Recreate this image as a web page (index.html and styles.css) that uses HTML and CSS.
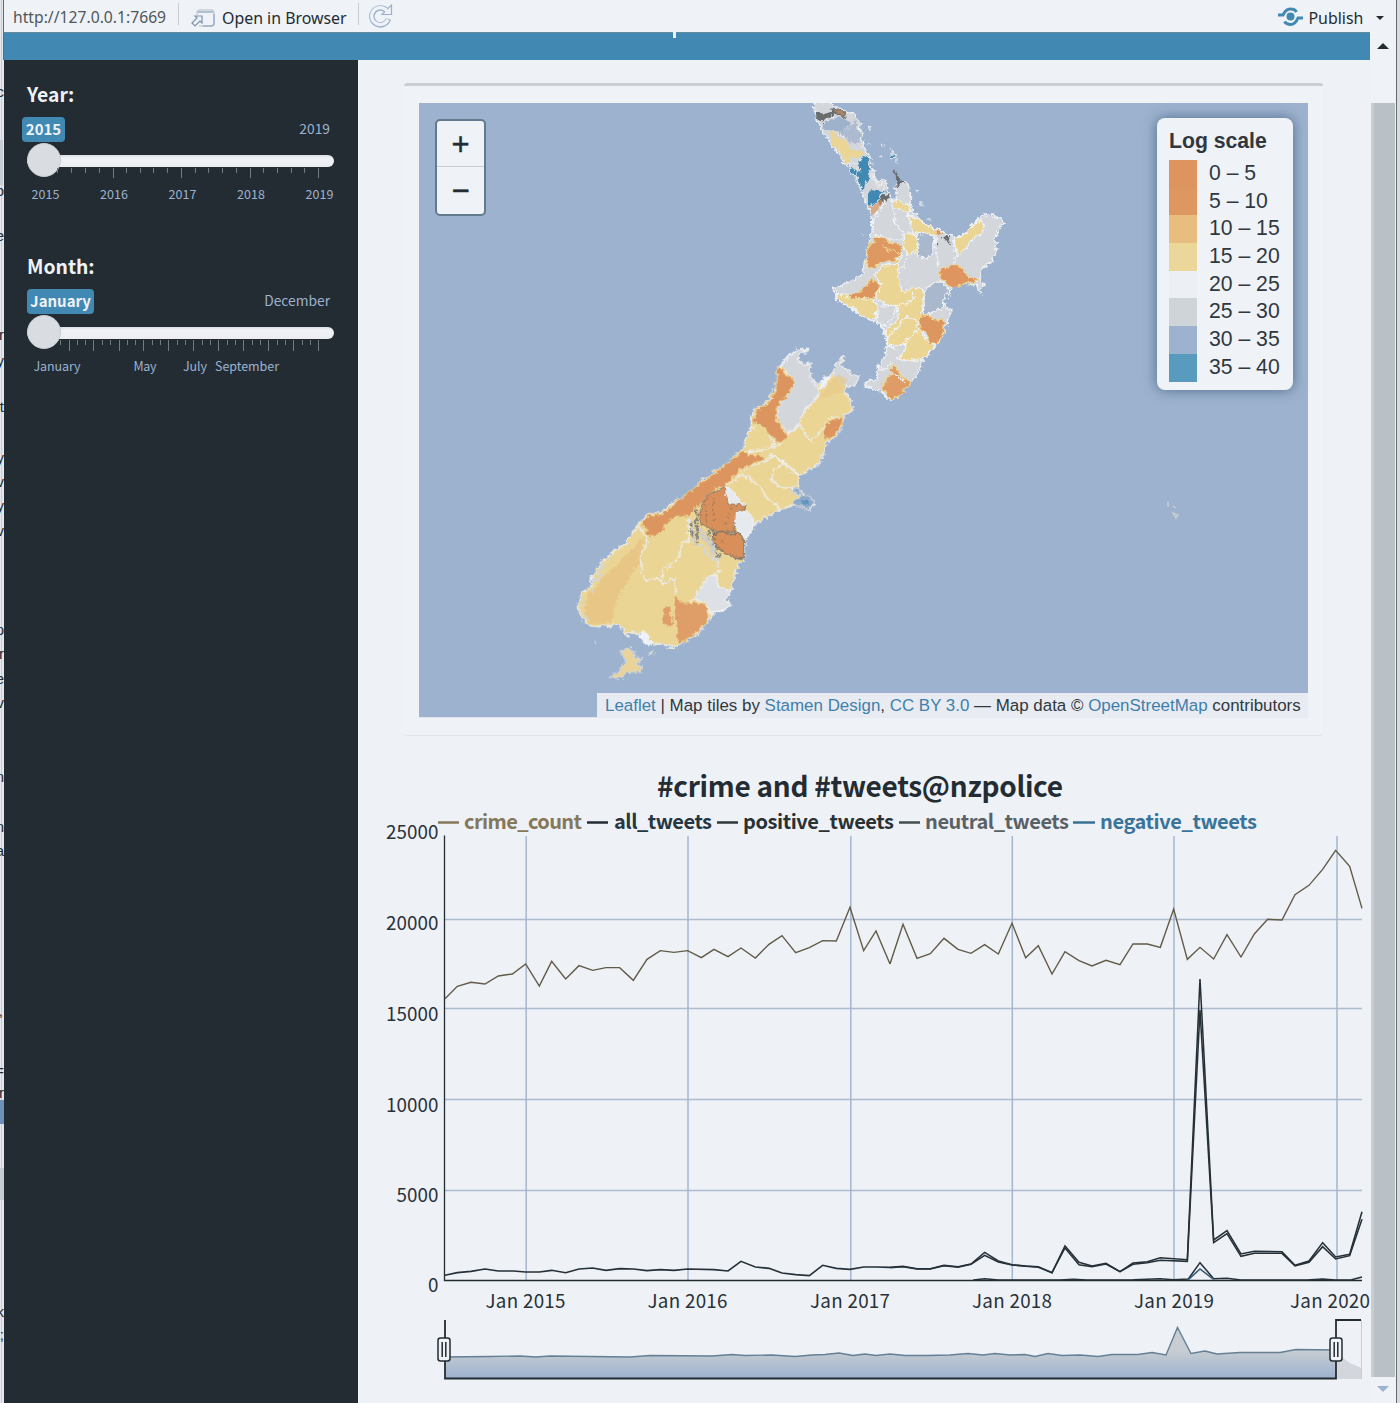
FILE: index.html
```html
<!DOCTYPE html>
<html lang="en">
<head>
<meta charset="utf-8">
<title>Crime dashboard</title>
<link rel="stylesheet" href="styles.css">
</head>
<body>
<div class="window">
  <svg class="edge" width="4" height="1403" viewBox="0 0 4 1403">
    <rect width="4" height="1403" fill="#e4e8ed"/>
    <path d="M1.5 0V1403" stroke="#c7cdd2"/><path d="M3.5 0V60" stroke="#646b70"/>
    <rect y="140" width="3" height="45" fill="#c7cdd2"/><rect y="1100" width="4" height="24" fill="#7190b8"/><rect y="1168" width="4" height="32" fill="#c7cdd2"/>
    <g class="edge-text" text-anchor="end">
      <text x="4" y="97">c</text><text x="4" y="196">o</text><text x="4" y="241">e</text><text x="4" y="340">r</text><text x="4" y="366">y</text><text x="4" y="412">t</text><text x="4" y="463">y</text><text x="4" y="487">v</text><text x="4" y="511">y</text><text x="4" y="536">v</text><text x="4" y="635">p</text><text x="4" y="659">r</text><text x="4" y="684">e</text><text x="4" y="708">v</text><text x="4" y="782">n</text><text x="4" y="832">n</text><text x="4" y="856">a</text><text x="3" y="1016">,</text><text x="4" y="1076">=</text><text x="4" y="1098">r</text><text x="4" y="1317">k</text><text x="4" y="1340">;</text>
    </g>
  </svg>

  <div class="viewer">
    <div class="toolbar">
      <span class="url">http://127.0.0.1:7669</span>
      <i class="sep"></i>
      <svg class="open-icon" width="25" height="20" viewBox="0 0 25 20" fill="none" stroke="#9db2ce">
        <path d="M6 7V5q0-3 3-3h11q3 0 3 3v10q0 3-3 3H8" stroke="#c7cdd2" stroke-width="1.5"/><path d="M7 4H22M23 6V15q0 3-3 3H12" stroke-width="1.5"/>
        <path d="M1 15L6 10L4 8H11V15L9 13L4 18Z" stroke="#7e93ac" stroke-width="1.2" fill="#eff2f7"/>
      </svg>
      <span class="open">Open in Browser</span>
      <i class="sep sep2"></i>
      <svg class="reload" width="24" height="24" viewBox="0 0 24 24" fill="none">
        <path d="M18 7A8.500 8.500 0 1 0 19.500 15" stroke="#9db2ce" stroke-width="5.500"/><path d="M13 10.500H22.500V1Z" fill="#eff2f7" stroke="#9db2ce" stroke-width="1.200"/>
        <path d="M18 7A8.500 8.500 0 1 0 19 15.500" stroke="#eff2f7" stroke-width="3.200"/>
      </svg>
      <span class="spring"></span>
      <svg class="pub-icon" width="25" height="20" viewBox="0 0 25 20">
        <circle cx="12.500" cy="9.500" r="4" fill="#4189b3"/>
        <path d="M0 8H5Q8 1.500 13 2Q17 2 18.500 5M25 11H20Q17 18 12 17.500Q8 17 6.500 14.500" fill="none" stroke="#4189b3" stroke-width="3"/>
      </svg>
      <span class="publish">Publish</span>
      <i class="caret"></i>
    </div>

    <div class="page">
      <div class="app">
        <div class="header"><i class="descender"></i></div>
        <div class="columns">
          <aside class="sidebar">
            <section class="control">
              <h4>Year:</h4>
              <div class="range-labels"><b class="tag tag-year">2015</b><span>2019</span></div>
              <div class="track"><i class="bar"></i><i class="knob"></i></div>
              <svg class="grid" width="310" height="38" viewBox="0 0 310 38">
                <path d="M30.500 2v5M44.500 2v5M58.500 2v5M72.500 2v5M99.500 2v5M113.500 2v5M126.500 2v5M140.500 2v5M168.500 2v5M181.500 2v5M195.500 2v5M209.500 2v5M236.500 2v5M250.500 2v5M264.500 2v5M277.500 2v5" stroke="#747b80"/>
                <path d="M86.500 2v10M154.500 2v10M223.500 2v10M291.500 2v10" stroke="#747b80"/>
                <g class="tick-text" text-anchor="middle"><text x="18.500" y="32.500" textLength="28">2015</text><text x="87" y="32.500" textLength="28">2016</text><text x="155.500" y="32.500" textLength="28">2017</text><text x="224" y="32.500" textLength="28">2018</text><text x="292.500" y="32.500" textLength="28">2019</text></g>
              </svg>
            </section>
            <section class="control">
              <h4>Month:</h4>
              <div class="range-labels"><b class="tag tag-month">January</b><span>December</span></div>
              <div class="track"><i class="bar"></i><i class="knob"></i></div>
              <svg class="grid" width="310" height="38" viewBox="0 0 310 38">
                <path d="M33.500 2v5M50.500 2v5M58.500 2v5M75.500 2v5M83.500 2v5M100.500 2v5M108.500 2v5M125.500 2v5M133.500 2v5M150.500 2v5M158.500 2v5M175.500 2v5M183.500 2v5M200.500 2v5M208.500 2v5M225.500 2v5M233.500 2v5M250.500 2v5M258.500 2v5M275.500 2v5M283.500 2v5" stroke="#747b80"/>
                <path d="M42.500 2v11M66.500 2v11M92.500 2v11M116.500 2v11M141.500 2v11M166.500 2v11M191.500 2v11M216.500 2v11M241.500 2v11M266.500 2v11M291.500 2v11" stroke="#747b80"/>
                <g class="tick-text" text-anchor="middle"><text x="30" y="32.500" textLength="47">January</text><text x="118" y="32.500" textLength="23">May</text><text x="168" y="32.500" textLength="24">July</text><text x="220" y="32.500" textLength="64">September</text></g>
              </svg>
            </section>
          </aside>

          <main class="content">
            <div class="box">
              <div class="map">
                <svg class="land" width="889" height="615" viewBox="419 103 889 615">
                  <defs>
                    <filter id="coast" filterUnits="userSpaceOnUse" x="419" y="90" width="889" height="628">
                      <feTurbulence type="turbulence" baseFrequency="0.160" numOctaves="2" seed="4"/>
                      <feDisplacementMap in="SourceGraphic" scale="6" xChannelSelector="R" yChannelSelector="G" result="rough"/>
                      <feOffset dx="-1.500" dy="-1.500"/>
                    </filter>
                  </defs>
                  <g filter="url(#coast)">
                  <g transform="translate(780 100) scale(.33333)" stroke="#eff2f7" stroke-width="4" stroke-linejoin="round">
                    <path fill="#d3d7dc" d="M98 5L152 5 158 20 185 22 200 40 222 38 228 55 240 68 238 85 247 100 244 118 248 140 262 160 270 180 268 200 282 215 278 230 290 248 300 238 316 240 320 265 326 285 330 298 346 296 345 260 350 245 380 245 385 270 392 290 390 310 400 335 415 355 440 372 465 385 480 392 508 402 520 410 545 405 575 375 605 345 640 345 655 352 672 366 660 372 650 390 648 440 640 475 625 490 605 510 598 535 612 555 600 580 590 552 550 550 515 560 505 580 490 600 495 620 513 630 500 665 495 690 465 735 432 775 410 820 385 850 365 880 335 900 318 895 300 870 275 865 255 858 252 850 265 842 285 840 292 800 315 765 318 735 316 700 300 670 265 658 230 635 200 615 165 595 163 565 190 550 210 540 240 530 255 500 258 450 265 425 272 405 275 370 270 335 262 318 255 300 240 270 236 245 215 215 208 195 190 190 185 175 175 160 150 130 135 105 123 88 118 70 105 50 103 32Z"/>
                    <g stroke="none">
                      <path fill="#6b6d6d" d="M104 34L130 38 150 34 158 20 182 24 198 42 195 54 170 42 145 52 132 60 123 70 106 52Z"/>
                      <path fill="#dd955f" d="M152 28L180 25 192 40 190 50 170 35Z" opacity=".55"/>
                      <path fill="#9fb2cb" d="M126 86L135 62 170 50 205 58 212 74 180 92 150 88Z"/>
                      <path fill="#acbbcf" d="M170 98L205 82 218 70 225 55 230 84 244 100 238 120 228 130 206 130 196 105Z"/>
                      <path fill="#ebd594" d="M145 98L160 95 170 108 195 118 204 140 222 152 248 152 252 160 228 172 205 166 208 190 194 188 188 168 168 145Z"/>
                      <path fill="#4189b3" d="M235 180L248 168 268 178 268 205 260 218 266 235 252 245 248 274 240 270 236 242 215 215 212 203 238 215Z"/>
                      <path fill="#4189b3" d="M270 268L290 268 302 274 320 270 298 282 290 304 270 314 260 312 262 292Z"/>
                      <path fill="#646b70" d="M300 288L326 280 324 296 304 312 292 312Z"/>
                      <path fill="#dd955f" d="M300 300L318 296 306 310 296 318 288 338 272 344 268 325Z" opacity=".7"/>
                      <path fill="#646b70" d="M335 206L345 216 355 234 374 246 350 260 347 238Z"/>
                    </g>
                    <path fill="#ebd594" d="M334 304L352 300 368 312 386 308 390 332 368 334 354 324 336 326Z"/>
                    <path fill="#ebd594" d="M380 340L410 358 440 372 465 386 480 398 460 406 400 398Z"/>
                    <path fill="#646b70" stroke="none" d="M463 430L475 428 466 440ZM482 412L508 402 502 422 510 434 490 420Z"/><path fill="#dd955f" stroke="none" d="M466 388L486 400 470 406Z"/>
                    <path fill="#ebd594" d="M520 413L548 405 575 375 600 357 609 370 606 395 575 418 560 438 534 462 522 436Z"/>
                    <path fill="#a9b8cd" d="M410 404L440 398 465 412 458 455 440 474 412 468 404 440Z"/>
                    <path fill="#ebd594" d="M366 400L400 398 412 415 408 455 384 460 368 445Z"/>
                    <path fill="#de9964" stroke="#ebd594" d="M284 408L305 410 326 425 362 434 360 464 345 474 358 482 306 484 284 503 259 498 258 455 265 430 280 426Z"/>
                    <path d="M305 432L325 448 360 460" stroke="#ebd594" fill="none"/>
                    <path fill="#de955f" stroke="#ebd594" d="M478 502L503 498 520 490 545 504 560 525 598 540 548 552 513 562 480 535Z"/>
                    <path fill="#a9b8cd" d="M455 550L480 542 505 565 505 580 490 600 485 624 460 632 438 646 424 634 432 610 430 570Z"/>
                    <path fill="#ebd594" d="M278 522L306 498 355 486 354 540 364 576 405 562 430 575 424 630 412 668 376 650 330 710 350 730 322 734 312 690 350 660 354 620 300 606 284 592 302 550Z"/>
                    <path fill="#ebd594" d="M300 606L320 612 352 614 386 606 400 592 400 576"/>
                    <path fill="#ebd594" d="M166 575L200 588 236 594 278 593 292 620 284 656 260 656 230 634 204 616 168 596Z"/>
                    <path fill="#dd955f" stroke="#ebd594" d="M204 585L248 568 270 533 298 553 280 592 208 594Z"/>
                    <path fill="#d3d7dc" d="M292 620L350 614 344 644 326 664 308 678 288 656Z"/>
                    <path fill="#ebd594" d="M318 712L345 685 378 650 408 660 416 682 400 706 374 728 346 734 324 734Z"/>
                    <path fill="#ebd594" d="M416 684L444 725 462 736 432 776 402 780 350 774 374 745 374 728Z"/>
                    <path fill="#dd965f" stroke="#ebd594" d="M418 644L450 646 460 656 493 660 492 690 468 730 446 730 438 702 416 684Z"/>
                    <path fill="#df9c66" stroke="#ebd594" d="M334 790L345 798 360 826 390 845 384 858 364 882 336 898 318 892 318 876 302 866 318 830 334 822Z"/>
                    <path d="M334 818L350 824 372 846M318 735L350 745M384 460L362 510M355 486L362 460M465 412L466 450 474 500M515 420L530 465 520 490M272 410L300 405 325 416 364 416M275 370L315 300M340 330L344 370 368 398M292 800L312 810 335 784" fill="none"/>
                    <path fill="#d3d7dc" stroke-width="2" d="M334 160L330 172 345 178 354 188M264 76l6 6-4 6zM302 132l12 2-6 6zM405 266l6 3-4 2zM422 310l6 2-4 3zM440 356l10 2zM248 400v5M332 154l4-8 12 14-4 10-10-3zM262 134l8-4zM298 168l8 0-3 5z"/>
                    <circle cx="338" cy="169" r="5" fill="#4189b3" stroke="none"/>
                    <path d="M280 218L270 232 284 240 288 256 310 250 308 264 325 262M212 190L236 188M230 205L225 240 250 275 254 310M280 186L270 194M245 165L238 180M292 262L300 250M172 96L196 112M135 58L160 48" stroke="#e4e8ec" fill="none"/>
                  </g>
                  <g transform="translate(560 340) scale(.33333)" stroke="#eff2f7" stroke-width="4" stroke-linejoin="round">
                    <path fill="#ebd594" d="M652 80L680 55 692 38 705 28 742 28 742 34 715 38 712 60 728 72 748 68 750 105 760 122 765 140 785 118 800 108 815 98 824 90 830 65 848 45 850 60 840 75 858 86 868 96 895 112 880 135 855 142 855 155 868 180 878 200 865 220 850 228 840 265 820 295 800 305 790 335 775 370 740 392 715 405 712 440 718 455 735 465 758 478 760 495 745 508 725 500 700 490 660 508 620 530 595 545 575 565 555 595 552 655 535 680 520 705 515 745 495 775 512 795 490 808 455 820 445 840 425 865 410 880 375 905 330 922 290 908 270 915 250 908 240 880 205 875 200 890 185 860 160 848 155 857 90 855 75 845 65 830 55 815 52 795 60 765 90 735 95 710 110 690 120 665 140 650 160 632 195 610 210 585 230 555 260 522 300 518 340 485 385 460 420 425 470 390 500 370 545 325 565 275 572 245 580 205 600 200 625 180 640 155 650 120Z"/>
                    <path fill="#e5b878" stroke="none" d="M210 630L245 600 250 590 240 660 200 720 170 780 150 848 92 850 70 815 85 760 140 700Z" opacity=".5"/>
                    <path fill="#d3d7dc" d="M660 78L680 55 705 28 742 28 716 38 712 60 728 72 748 70 750 105 776 150 772 166 730 212 718 246 700 268 676 274 654 240 650 208 665 182 680 172 700 126 690 108Z"/>
                    <path fill="#d3d7dc" stroke-width="3" d="M815 98L830 65 848 45 840 75 868 96 895 112 880 135 855 140 835 120Z"/>
                    <path fill="#eff2f7" d="M776 148L785 118 812 102 792 135Z"/>
                    <path fill="#e8c98a" stroke="none" d="M820 108l38 4-10 40-70 20z" opacity=".7"/>
                    <path d="M718 250L735 282 756 303 775 280 812 230 850 228M774 166L730 212M640 322L716 252M565 275L592 244 640 300 640 322 550 338M632 340L680 372 716 404M550 388L580 370 612 362 640 345 665 368 640 390 634 420 660 440 712 442M546 400L590 430 620 474 662 508M496 438L546 398M665 368L712 405M232 556L262 590 255 620 238 650 248 705 256 720 292 710 308 732 345 715 342 760M385 528L384 600 364 608 355 645 330 678 308 685 306 724M468 655L476 690 462 705 465 750 505 752M340 765L350 900M405 770L380 790" fill="none"/>
                    <path fill="#dd955f" stroke="#ebd594" d="M652 80L665 82 674 106 690 108 702 124 690 150 680 174 664 180 648 210 652 238 675 275 683 284 668 304 645 303 638 292 610 266 592 246 576 254 586 204 602 203 628 182 645 150Z"/>
                    <path fill="#dd955f" stroke="#ebd594" d="M548 326L562 344 612 346 610 358 580 366 548 386 520 408 494 438 470 442 420 490 385 526 345 530 320 548 300 582 264 590 262 570 240 552 262 524 305 520 345 486 420 428 490 378Z"/>
                    <path fill="#dd955f" stroke="#ebd594" d="M848 228L840 262 818 292 792 298 786 270 812 234Z"/>
                    <path fill="#d98f5a" stroke="#8b7b6a" d="M445 465L488 442 500 460 502 490 530 492 554 494 548 508 532 512 526 540 518 555 524 572 460 574 440 560 424 554 416 525 424 490Z"/>
                    <path fill="#d98f5a" stroke="#6e6c68" d="M460 580L490 576 515 580 530 574 550 595 550 656 520 650 490 635 458 610Z"/>
                    <path fill="#e6e9ee" d="M494 444L512 446 538 480 552 490 510 488 500 466ZM528 515L560 510 585 545 555 592 542 580 522 556Z"/>
                    <g fill="none" stroke-width="6"><path d="M388 535L400 605 425 615 440 645 465 660 488 650" stroke="#d3d7dc"/><path d="M408 508V612M390 545L395 590M444 570V600M465 610L472 650 484 646" stroke="#747778" stroke-dasharray="18 5"/><path d="M416 565L430 590 455 612 462 645" stroke="#c7cdd2" stroke-width="13" stroke-dasharray="10 3"/><path d="M512 504L490 560M485 600L470 616M458 460V540M435 480V550" stroke="#545859" stroke-width="3" stroke-dasharray="4 11"/></g>
                    <path fill="#dde1e6" d="M440 708L468 704 470 735 510 752 495 776 512 795 488 806 452 816 432 786 402 774 412 752Z"/>
                    <path fill="#df9d67" stroke="#ebd594" d="M338 762L355 778 378 788 432 786 446 828 440 845 410 876 372 906 350 910 348 870Z"/>
                    <path fill="#df9d67" stroke="#ebd594" d="M310 798L332 794 340 858 305 852Z"/>
                    <path fill="#eff2f7" d="M244 870L262 880 264 898 278 910 256 914 240 890Z"/>
                    <path fill="#8eaacb" stroke="#d3d7dc" d="M690 450L714 440 720 460 750 468 760 488 745 506 725 500 700 490 706 478 720 468Z"/><path fill="#5b92bd" stroke="none" d="M722 480h24v12h-14z"/>
                    <path stroke="#d3d7dc" stroke-width="8" fill="none" stroke-dasharray="9 5" d="M60 765L72 800M94 725L130 705M100 752L80 740M66 822L85 840M130 670L115 700M150 650L158 658"/>
                    <path fill="#e9d398" stroke="#d3d7dc" d="M180 936L200 922 214 930 226 950 244 952 230 966 244 978 240 994 205 995 180 1015 152 1010 178 990 195 960ZM262 938L282 932 272 945Z"/>
                    <path d="M98 905h6v4M912 135L935 120M918 138L935 142" fill="none" stroke-width="3"/>
                  </g>
                  </g>
                  <path d="M1168 502v5M1173 506l3 2M1173 513l5 2-2 3z" fill="none" stroke="#c7cdd2" stroke-width="1.500"/>
                  <path d="M419 717.500H597" stroke="#dfe4eb"/>
                </svg>
                <div class="zoom"><b>+</b><b>−</b></div>
                <div class="legend">
                  <strong>Log scale</strong>
                  <div class="row"><i class="c1"></i>0 – 5</div>
                  <div class="row"><i class="c2"></i>5 – 10</div>
                  <div class="row"><i class="c3"></i>10 – 15</div>
                  <div class="row"><i class="c4"></i>15 – 20</div>
                  <div class="row"><i class="c5"></i>20 – 25</div>
                  <div class="row"><i class="c6"></i>25 – 30</div>
                  <div class="row"><i class="c7"></i>30 – 35</div>
                  <div class="row"><i class="c8"></i>35 – 40</div>
                </div>
                <div class="attribution"><a>Leaflet</a> | Map tiles by <a>Stamen Design</a>, <a>CC BY 3.0</a> — Map data © <a>OpenStreetMap</a> contributors</div>
              </div>
            </div>

            <svg class="chart" width="1012" height="668" viewBox="358 735 1012 668">
              <defs><linearGradient id="fade" x1="0" y1="0" x2="0" y2="1"><stop offset="0.450" stop-color="#c7cdd2"/><stop offset="1" stop-color="#9db2ce"/></linearGradient></defs>
              <text class="title" x="657" y="797" textLength="406">#crime and #tweets@nzpolice</text>
              <g class="keys">
                <path d="M438 822.500h21" stroke="#857759"/><text x="464" y="829" textLength="118" fill="#857759">crime_count</text>
                <path d="M587 822.500h21" stroke="#232c33"/><text x="614" y="829" textLength="98" fill="#253642">all_tweets</text>
                <path d="M717 822.500h21" stroke="#2f373b"/><text x="743" y="829" textLength="151" fill="#293135">positive_tweets</text>
                <path d="M899 822.500h21" stroke="#444d52"/><text x="925" y="829" textLength="144" fill="#596167">neutral_tweets</text>
                <path d="M1073 822.500h22" stroke="#39718f"/><text x="1100" y="829" textLength="157" fill="#397498">negative_tweets</text>
              </g>
              <path d="M445 919.500H1362M445 1008.500H1362M445 1099.500H1362M445 1190.500H1362" stroke="#adbccf" stroke-width="1.400"/>
              <path d="M526.200 836V1280M688 836V1280M850.800 836V1280M1012.300 836V1280M1174 836V1280M1337 836V1280" stroke="#a5b7cf" stroke-width="1.500"/>
              <path d="M444.500 835.500V1280.500H1362" stroke="#232c33" stroke-width="1.300" fill="none"/>
              <g class="axis" text-anchor="end"><text x="438.500" y="839" textLength="52.500">25000</text><text x="438.500" y="930" textLength="52.500">20000</text><text x="438.500" y="1021" textLength="52.500">15000</text><text x="438.500" y="1112" textLength="52.500">10000</text><text x="438.500" y="1201.500" textLength="42">5000</text><text x="438.500" y="1292">0</text></g>
              <g class="axis" text-anchor="middle"><text x="525.500" y="1308" textLength="80">Jan 2015</text><text x="687.500" y="1308" textLength="80">Jan 2016</text><text x="850" y="1308" textLength="80">Jan 2017</text><text x="1012" y="1308" textLength="80">Jan 2018</text><text x="1174" y="1308" textLength="80">Jan 2019</text><text x="1330" y="1308" textLength="80">Jan 2020</text></g>
              <g transform="translate(370 760) scale(.33333)" fill="none" stroke="#625b47" stroke-width="4.200">
                <polyline points="225,716 262,679 303,667 345,672 385,648 427,642 467,612 508,678 545,604 587,657 627,617 668,631 708,623 749,623 790,661 831,598 871,572 912,577 953,572 994,593 1032,568 1074,590 1113,564 1156,594 1197,553 1236,527 1277,578 1318,563 1358,542 1399,543 1440,442 1481,572 1518,513 1560,612"/>
                <polyline transform="translate(1530 0)" points="30,612 69,493 111,595 151,581 192,535 234,568 273,580 314,554 355,582 396,490 437,593 475,557 516,642 555,575 597,602 636,618 678,601 720,614 759,552 802,552 841,562 881,447 922,598 960,562 1001,597 1041,524 1083,591 1123,522 1163,478 1206,480 1245,404 1287,376 1328,328 1367,271 1409,319 1446,445"/>
              </g>
              <g transform="translate(370 1180) scale(.33333)" fill="none" stroke="#263038" stroke-width="4.800">
                <polyline points="225,286 262,278 303,274 345,267 385,273 430,273 467,276 508,276 545,271 587,278 627,267 668,264 708,271 749,266 790,267 831,272 871,269 912,271 953,267 1032,269 1074,273 1113,244 1156,261 1197,265 1236,279 1277,284 1318,287 1358,256 1399,265 1440,268 1481,261 1518,261 1560,262"/>
                <g transform="translate(1530 0)" stroke-width="4.600">
                  <polyline points="30,262 69,259 111,266 151,266 192,256 234,260 273,252 314,217 355,243 396,254 437,258 475,260 516,278 555,198 597,247 636,258 678,250 720,275 759,249 802,245 841,233 922,239 960,-603 1001,180 1041,152 1083,222 1123,214 1206,215 1245,256 1287,243 1328,188 1367,231 1409,223 1446,95"/>
                  <polyline points="30,263 69,260 111,267 151,267 192,257 234,262 273,253 314,226 355,246 396,255 437,259 475,262 516,278 555,204 597,254 636,260 678,252 720,275 759,253 802,248 841,241 922,244 960,-510 1001,188 1041,161 1083,229 1123,220 1206,220 1245,258 1287,247 1328,200 1367,237 1409,227 1446,118"/>
                  <polyline points="280,300 314,296 355,300 540,300 580,298 620,300 760,299 840,296 880,299 925,297 960,248 1001,296 1041,295 1083,300 1280,300 1328,297 1367,300 1415,299 1446,291"/>
                  <polyline stroke="#355c78" points="925,299 960,267 1001,298"/>
                </g>
              </g>
              <g class="range">
                <path fill="url(#fade)" d="M445 1357L490 1356.500 520 1356 536 1357 550 1356 630 1357 650 1355.500 712 1356 732 1354.500 745 1355.500 772 1355 795 1356.500 812 1355 825 1354.500 839 1353 853 1355.500 865 1354 876 1355.500 890 1354 905 1355.500 927 1355.500 950 1355 968 1353.500 983 1355 995 1353.500 1010 1355 1025 1354.500 1035 1356.500 1048 1353.500 1062 1355.500 1080 1355 1098 1356.500 1112 1354.500 1138 1354.500 1152 1352.500 1166 1355 1177.500 1327.500 1191 1353.500 1205 1351 1217 1354 1240 1352.500 1280 1352.500 1296 1349.500 1336 1350V1378H445Z"/>
                <path fill="none" stroke="#657f95" stroke-width="1.400" d="M445 1357L490 1356.500 520 1356 536 1357 550 1356 630 1357 650 1355.500 712 1356 732 1354.500 745 1355.500 772 1355 795 1356.500 812 1355 825 1354.500 839 1353 853 1355.500 865 1354 876 1355.500 890 1354 905 1355.500 927 1355.500 950 1355 968 1353.500 983 1355 995 1353.500 1010 1355 1025 1354.500 1035 1356.500 1048 1353.500 1062 1355.500 1080 1355 1098 1356.500 1112 1354.500 1138 1354.500 1152 1352.500 1166 1355 1177.500 1327.500 1191 1353.500 1205 1351 1217 1354 1240 1352.500 1280 1352.500 1296 1349.500 1336 1350"/>
                <path fill="#d3d7dd" d="M1337 1350L1343 1358 1350 1363 1361.500 1368V1379H1337Z"/><path d="M1361.500 1320V1379" stroke="#c7cdd2"/>
                <path d="M445 1320V1378.500H1336V1320H1361" fill="none" stroke="#232c33" stroke-width="1.800"/>
                <g fill="#eff2f7" stroke="#232c33" stroke-width="1.500"><rect x="438" y="1338" width="12" height="23" rx="2.500"/><path d="M442.200 1342v15M445.800 1342v15"/><rect x="1330" y="1338" width="12" height="23" rx="2.500"/><path d="M1334.200 1342v15M1337.800 1342v15"/></g>
              </g>
            </svg>
          </main>
        </div>
      </div>
      <div class="scrollbar"><i class="up"></i><i class="thumb"></i><i class="down"></i></div>
    </div>
  </div>
  <div class="right-edge"></div>
</div>
</body>
</html>
```
FILE: styles.css
```css
* { box-sizing: border-box; }
body { margin: 0; background: #eff2f7; color: #232c33; font-family: "Noto Sans CJK SC", "Noto Sans", sans-serif; overflow: hidden; }
.window { display: flex; width: 1400px; height: 1403px; overflow: hidden; }
.edge { flex: none; display: block; overflow: hidden; }
.edge-text { font: 15px "Liberation Sans", sans-serif; fill: #232c33; }
.viewer { width: 1391.500px; display: flex; flex-direction: column; }
.right-edge { flex: 1; border-left: 1.500px solid #646b70; background: #d8dce1; }

.toolbar { height: 32px; flex: none; display: flex; align-items: center; font: 15.900px/32px "Noto Sans", sans-serif; white-space: nowrap; padding-left: 9px; }
.url { width: 165px; color: #50575c; padding-top: 2px; font-size: 15.700px; }
.sep { width: 1px; height: 22px; background: #c7cdd2; margin-top: -4px; }
.sep2 { margin-left: 11px; }
.open-icon { margin: 3px 0 0 12px; }
.open { margin-left: 6px; width: 125px; padding-top: 4px; }
.reload { margin-left: 10px; }
.spring { flex: 1; }
.pub-icon { margin: 2px 6px 0 0; }
.publish { padding-top: 4px; width: 54px; }
.caret { border: 4.500px solid transparent; border-top-color: #232c33; border-bottom: 0; margin: 4px 12px 0 13px; }

.page { display: flex; flex: 1; min-height: 0; }
.app { width: 1366px; display: flex; flex-direction: column; }
.header { height: 28px; flex: none; background: #4189b3; border-top: 1px solid #658b9f; }
.descender { display: block; width: 3px; height: 6px; margin: -1px 0 0 669px; background: #eff2f7; }
.columns { display: flex; flex: 1; min-height: 0; }
.sidebar { width: 354px; flex: none; background: #232c33; color: #eff2f7; padding: 20px 21px 0 21px; }
.control { height: 172px; }
.control h4 { margin: 0 0 0 2px; font-size: 19.300px; line-height: 28px; font-weight: 700; }
.range-labels { display: flex; justify-content: space-between; align-items: center; height: 25px; margin-top: 9px; margin-left: -3px; font-size: 13.800px; line-height: 20px; color: #9db2ce; padding-right: 7px; }
.range-labels span { margin-top: -4px; }
.tag { background: #4189b3; color: #eff2f7; border-radius: 4px; height: 25px; line-height: 24px; text-align: center; font-size: 15px; }
.tag-year { width: 43px; }
.tag-month { width: 67px; margin-left: 5px; }
.track { display: grid; height: 33px; align-items: center; margin-left: 2px; margin-top: 1px; }
.bar, .knob { grid-area: 1 / 1; }
.bar { width: 307px; height: 12px; border-radius: 6px; background: linear-gradient(#d9dde2, #eff2f7 25%, #ecedef); margin-top: 2px; }
.knob { width: 34px; height: 34px; border-radius: 50%; background: #d9dde2; border: 1px solid #c7cdd2; }
.grid { display: block; margin: -10px 0 0 2px; }
.tick-text { font-size: 12.500px; fill: #9db2ce; }

.content { width: 1012px; background: #eef1f6; }
.box { margin: 23px 0 0 46px; width: 919px; height: 652px; border-top: 3px solid #c9ced4; border-radius: 3px; background: #eff2f7; padding: 17px 15px; box-shadow: 0 1px 1px rgba(0,0,0,.06); }
.map { position: relative; width: 889px; height: 615px; background: #9db2ce; font-family: "Liberation Sans", sans-serif; }
.land { display: block; }
.zoom { position: absolute; left: 16px; top: 16px; width: 51px; height: 97px; border: 2px solid #617b8d; border-radius: 5px; background: #eff2f7; display: grid; grid-template-rows: 45px 48px; text-align: center; }
.zoom b { font-size: 31px; line-height: 48px; font-weight: 400; -webkit-text-stroke: .4px #232c33; }
.zoom b + b { border-top: 1px solid #c7cdd2; line-height: 47px; }
.legend { position: absolute; right: 15px; top: 15px; width: 136px; height: 272px; border-radius: 8px; background: #eff2f7; box-shadow: 0 0 13px rgba(35,70,100,.65); padding: 9px 12px; font-size: 21.200px; color: #30383e; white-space: nowrap; }
.legend strong { display: block; line-height: 28px; height: 33px; font-size: 21.200px; }
.row { display: flex; line-height: 26.500px; height: 27.700px; }
.row i { width: 28px; margin-right: 12px; }
.c1 { background: #dd945f; }
.c2 { background: #de9761; }
.c3 { background: #e8bd80; }
.c4 { background: #ebd799; }
.c5 { background: #eceff4; }
.c6 { background: #cfd4d9; }
.c7 { background: #9db2ce; }
.c8 { background: #599abf; }
.attribution { position: absolute; right: 0; bottom: 0; width: 711px; height: 25px; padding-left: 8px; background: #e8ecf2; font-size: 16.930px; line-height: 26px; white-space: nowrap; color: #30383e; }
.attribution a { color: #3f7fab; }

.chart { display: block; }
.title { font-size: 28px; font-weight: 700; fill: #232c33; }
.keys { font-size: 20px; font-weight: 700; stroke-width: 2.500px; }
.keys text { stroke: none; }
.axis { font-size: 18.800px; fill: #293238; }

.scrollbar { width: 25px; margin-left: 1px; background: #eff2f7; display: flex; flex-direction: column; align-items: center; }
.up { border: 6px solid transparent; border-top: 0; border-bottom-color: #232c33; margin-top: 11px; }
.thumb { width: 24px; height: 1274px; flex: none; margin-top: 54px; background: #b9c0c6; border-left: 3px solid #c7cdd2; }
.down { border: 6px solid transparent; border-bottom: 0; border-top-color: #9db2ce; margin-top: 9px; }
```
